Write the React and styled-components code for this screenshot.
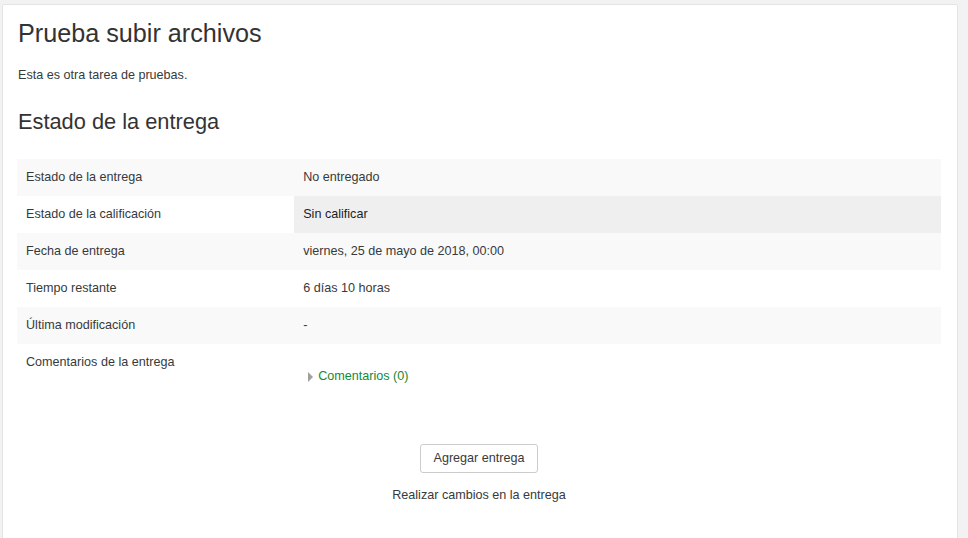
import React from 'react'
import styled, { createGlobalStyle } from 'styled-components'

const GlobalStyle = createGlobalStyle`
  body {
    margin: 0;
    background: #f2f2f2;
    font-family: "Liberation Sans", Arial, sans-serif;
    color: #373a3c;
  }
`

const Page = styled.div`
  padding: 4px 10px 0 2px;
  height: 538px;
  box-sizing: border-box;
  overflow: hidden;
`

const Card = styled.div`
  background: #fff;
  border: 1px solid #e4e4e4;
  border-radius: 2px;
  padding: 13px 16px 60px 14px;
  min-height: 560px;
  box-sizing: border-box;
`

const Title = styled.h1`
  margin: 0 0 17px 1px;
  font-size: 25.2px;
  line-height: 31px;
  font-weight: 400;
  color: #333;
`

const Intro = styled.p`
  margin: 0 0 24px 1px;
  font-size: 12.6px;
  line-height: 19px;
`

const Heading = styled.h2`
  margin: 0 0 25px 1px;
  font-size: 21.8px;
  line-height: 25px;
  font-weight: 400;
  color: #333;
`

const Table = styled.table`
  width: 100%;
  border-collapse: collapse;
  font-size: 12.6px;
  line-height: 19px;
`

const Row = styled.tr`
  background: ${p => (p.striped ? '#f9f9f9' : '#fff')};
  & + & td {
    border-top: 1px solid #ececec;
  }
`

const Cell = styled.td`
  padding: 9px 9px;
  vertical-align: top;
  width: ${p => (p.label ? '30%' : 'auto')};
  background: ${p => (p.highlight ? '#efefef' : 'transparent')};
  color: ${p => (p.highlight ? '#1d1d1d' : '#373a3c')};
`

const CommentsToggle = styled.a`
  display: inline-flex;
  align-items: center;
  gap: 5px;
  margin: 14px 0 0 5px;
  color: #138a34;
  text-decoration: none;
  cursor: pointer;
`

const Arrow = styled.span`
  width: 0;
  height: 0;
  border-top: 5px solid transparent;
  border-bottom: 5px solid transparent;
  border-left: 5px solid #a0a0a0;
`

const Actions = styled.div`
  display: flex;
  flex-direction: column;
  align-items: center;
  gap: 13px;
  margin-top: 47px;
  font-size: 12.6px;
`

const Button = styled.button`
  font-family: inherit;
  font-size: 12.6px;
  color: #373a3c;
  background: #fff;
  border: 1px solid #ccc;
  border-radius: 3px;
  padding: 6px 12px;
  line-height: 15px;
  cursor: pointer;
`

const Help = styled.div`
  line-height: 18px;
  color: #373a3c;
`

const rows = [
  ['Estado de la entrega', 'No entregado'],
  ['Estado de la calificación', 'Sin calificar', true],
  ['Fecha de entrega', 'viernes, 25 de mayo de 2018, 00:00'],
  ['Tiempo restante', '6 días 10 horas'],
  ['Última modificación', '-'],
]

export default function App() {
  return (
    <Page>
      <GlobalStyle />
      <Card>
        <Title>Prueba subir archivos</Title>
        <Intro>Esta es otra tarea de pruebas.</Intro>
        <Heading>Estado de la entrega</Heading>
        <Table>
          <tbody>
            {rows.map(([label, value, hl], i) => (
              <Row key={label} striped={i % 2 === 0}>
                <Cell label>{label}</Cell>
                <Cell highlight={hl}>{value}</Cell>
              </Row>
            ))}
            <Row>
              <Cell label>Comentarios de la entrega</Cell>
              <Cell>
                <CommentsToggle>
                  <Arrow />
                  Comentarios (0)
                </CommentsToggle>
              </Cell>
            </Row>
          </tbody>
        </Table>
        <Actions>
          <Button>Agregar entrega</Button>
          <Help>Realizar cambios en la entrega</Help>
        </Actions>
      </Card>
    </Page>
  )
}
